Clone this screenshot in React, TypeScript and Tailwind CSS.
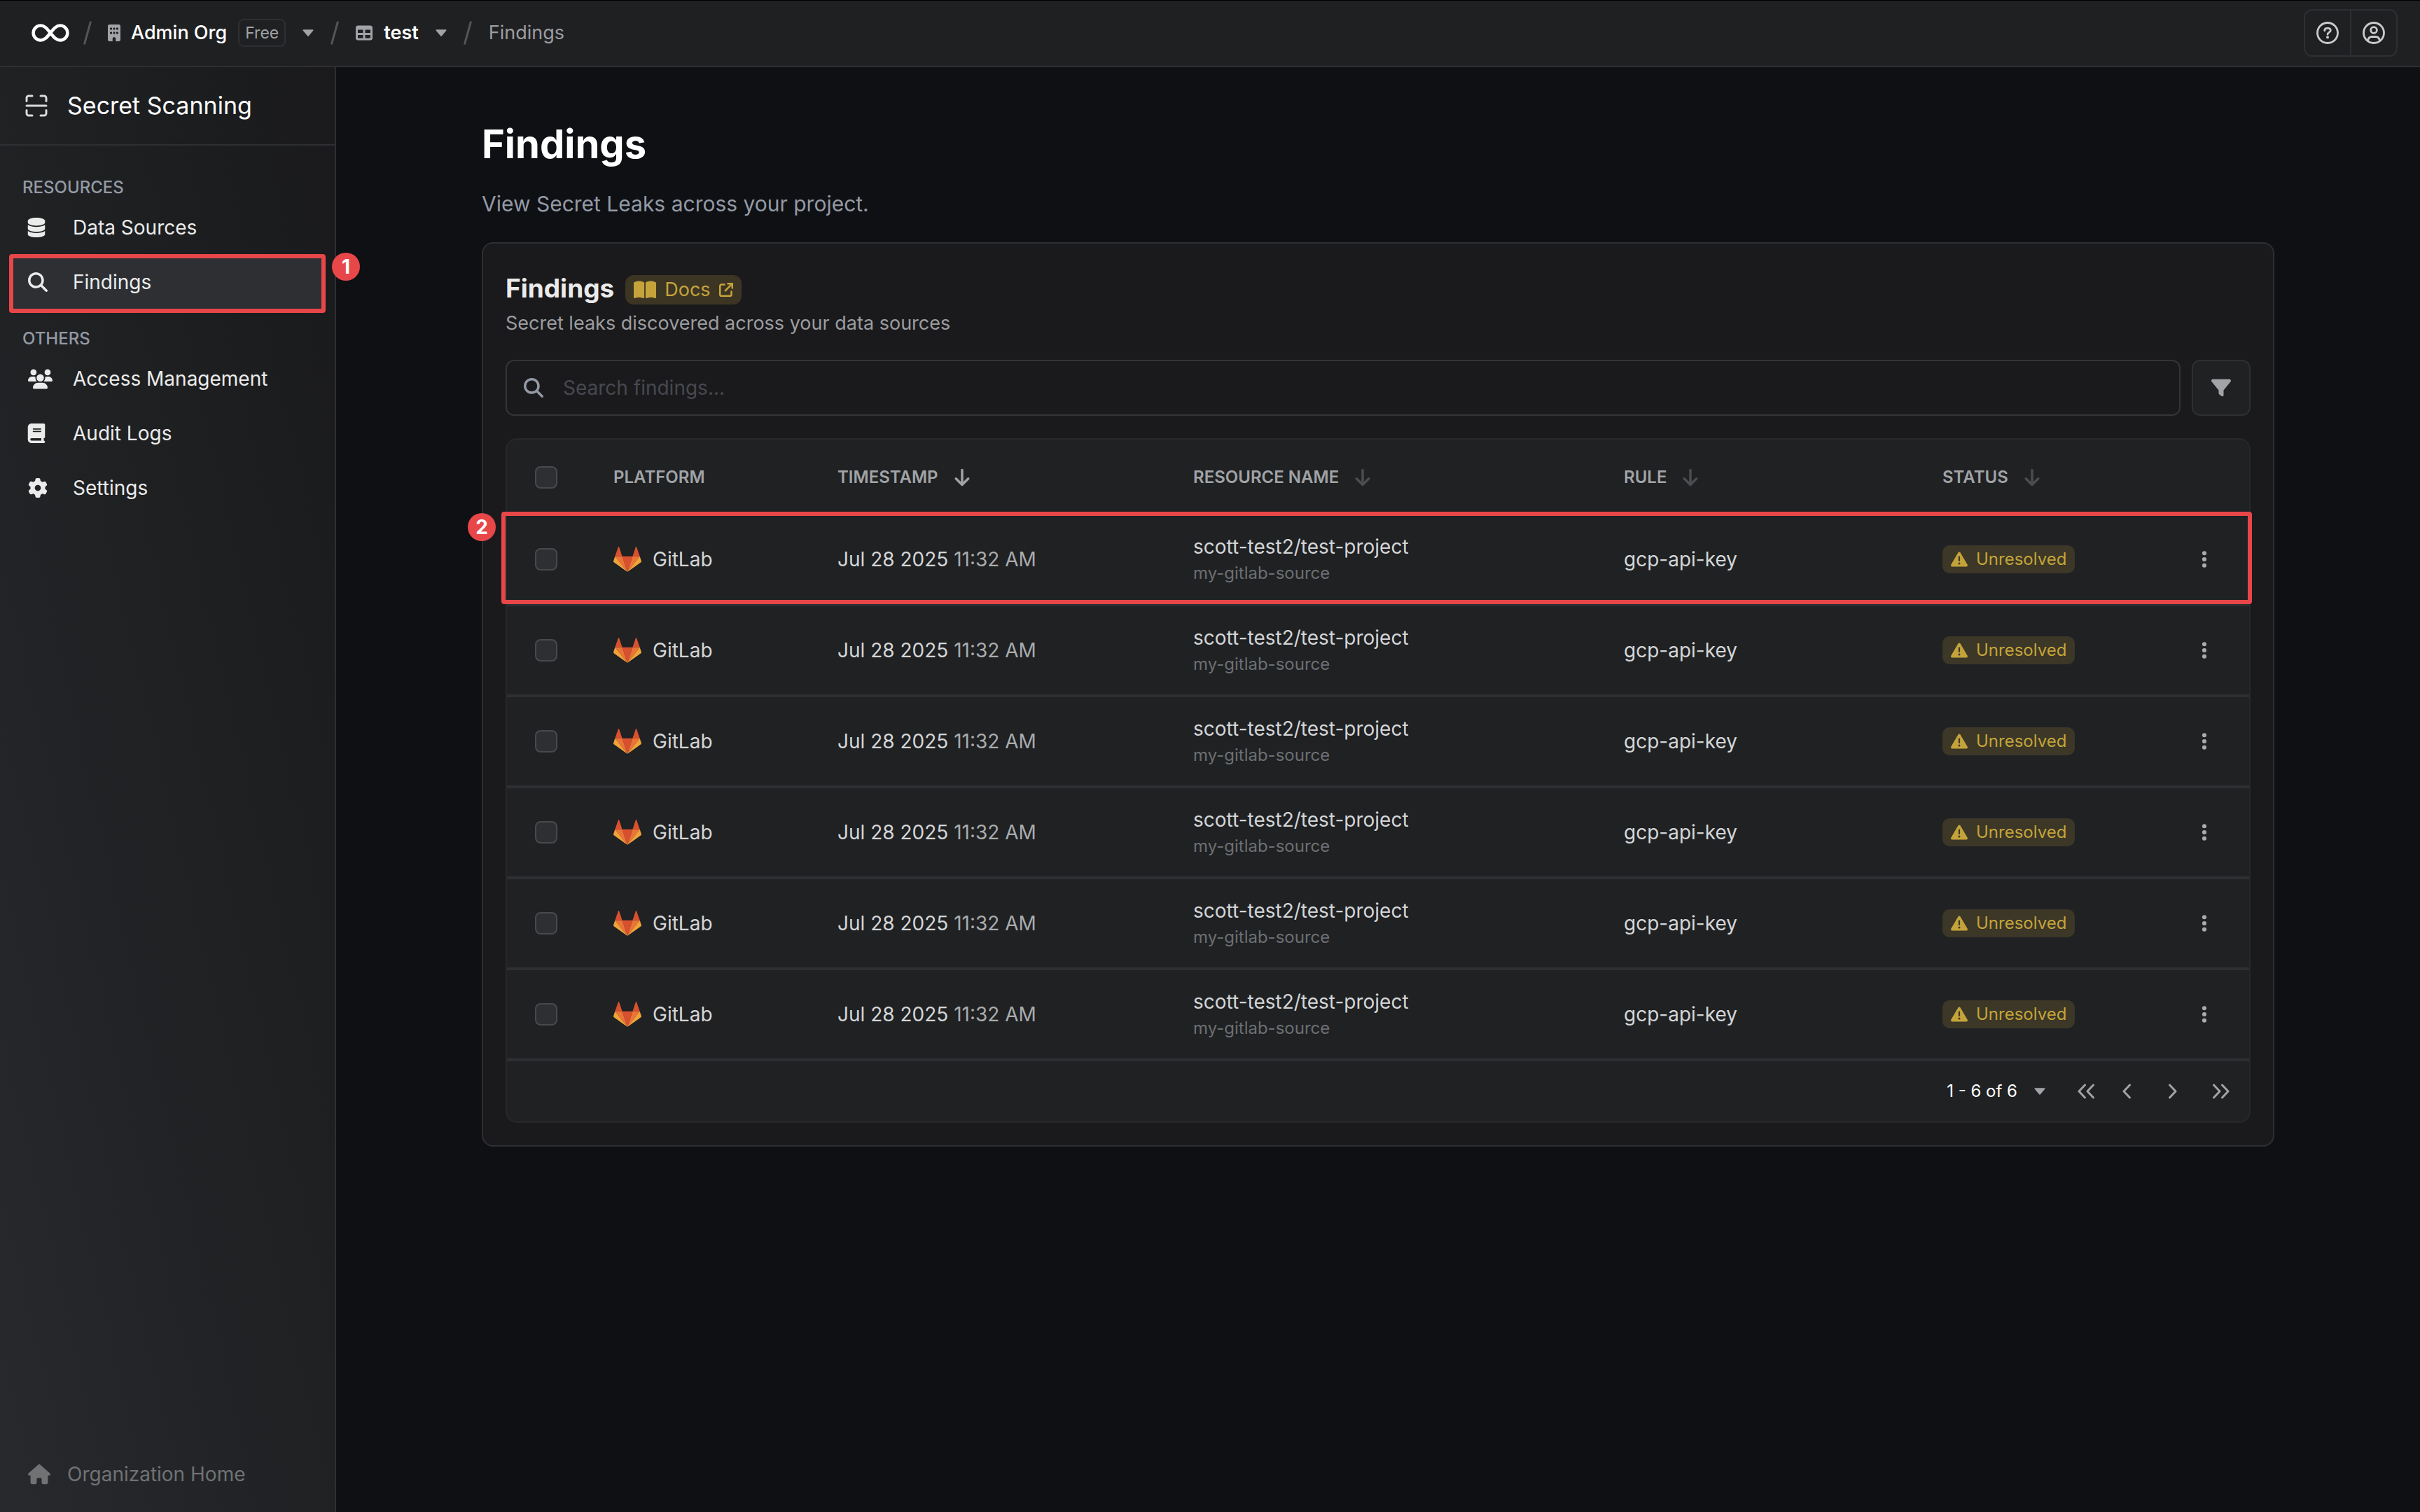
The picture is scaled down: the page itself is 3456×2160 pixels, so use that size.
import type { ReactNode } from "react";
import {
  FaArrowDown,
  FaArrowUpRightFromSquare,
  FaBook,
  FaBookOpen,
  FaBuilding,
  FaDatabase,
  FaEllipsisVertical,
  FaFilter,
  FaGear,
  FaHouse,
  FaMagnifyingGlass,
  FaTable,
  FaTriangleExclamation,
  FaUsers,
} from "react-icons/fa6";

const findings = Array.from({ length: 6 }, (_, i) => ({
  id: i + 1,
  platform: "GitLab",
  date: "Jul 28 2025",
  time: "11:32 AM",
  resource: "scott-test2/test-project",
  source: "my-gitlab-source",
  rule: "gcp-api-key",
  status: "Unresolved",
}));

function InfinityLogo() {
  return (
    <svg className="h-[26px] w-[54px]" viewBox="0 0 54 26" fill="none" stroke="#fff" strokeWidth="4.5">
      <path d="M27 13C21.5 6 18.5 2.6 13 2.6A10.4 10.4 0 0 0 13 23.4C18.500 23.400 21.500 20 27 13S35.500 2.600 41 2.600A10.400 10.400 0 0 1 41 23.400C35.500 23.400 32.500 20 27 13Z" />
    </svg>
  );
}

function Slash() {
  return (
    <svg className="h-[34px] w-3 shrink-0" viewBox="0 0 12 34" stroke="#545557" strokeWidth="3" strokeLinecap="round">
      <path d="M10.300 1.700 1.700 32.300" />
    </svg>
  );
}

function ScanIcon() {
  return (
    <svg className="h-8 w-8" viewBox="0 0 32 32" fill="none" stroke="#d9dadb" strokeWidth="3" strokeLinecap="round">
      <path d="M2 9.500V5a3 3 0 0 1 3-3h5M22 2h5a3 3 0 0 1 3 3v4.500M30 22.500V27a3 3 0 0 1-3 3h-5M10 30H5a3 3 0 0 1-3-3v-4.500M2 16h28" />
    </svg>
  );
}

function GitLabLogo() {
  return (
    <svg className="h-9 w-10 shrink-0" viewBox="0 0 40 36">
      <path fill="#d9502f" d="M20 36 27.400 13.700H12.600Z" />
      <path fill="#ec7436" d="M20 36 12.600 13.700H2.300ZM20 36l7.400-22.300h10.300Z" />
      <path fill="#f0a33a" d="M2.300 13.700.1 20.500c-.2.700 0 1.300.6 1.700L20 36ZM37.700 13.700l2.200 6.800c.2.700 0 1.300-.6 1.700L20 36Z" />
      <path fill="#d9502f" d="M2.300 13.700h10.300L8.200.4C8 -.1 7.100-.1 6.900.4ZM37.700 13.700H27.400L31.800.4c.2-.500 1.100-.500 1.300 0Z" />
    </svg>
  );
}

function HelpIcon() {
  return (
    <svg className="h-8 w-8" viewBox="0 0 32 32" fill="none" stroke="#c8cacc" strokeWidth="2.800">
      <circle cx="16" cy="16" r="14.500" />
      <path d="M11.800 12.800c0-2.300 1.500-3.500 3.400-3.500h1.700c2 0 3.400 1.300 3.400 3.100 0 2.600-4.300 3-4.300 5.800" strokeLinecap="round" />
      <circle cx="16" cy="22.300" r="2" fill="#c8cacc" stroke="none" />
    </svg>
  );
}

function UserIcon() {
  return (
    <svg className="h-8 w-8" viewBox="0 0 32 32" fill="none" stroke="#c8cacc" strokeWidth="2.800">
      <circle cx="16" cy="16" r="14.500" />
      <circle cx="16" cy="12" r="4.400" />
      <path d="M7.500 27.200c.6-3.600 2.700-5.700 5.500-5.700h6c2.800 0 4.900 2.100 5.500 5.700" />
    </svg>
  );
}

function Chevron({ double, right }: { double?: boolean; right?: boolean }) {
  return (
    <svg
      className={`h-[22px] ${double ? "w-6" : "w-3"} ${right ? "rotate-180" : ""}`}
      viewBox={double ? "0 0 24 22" : "0 0 12 22"}
      fill="none"
      stroke="#a1a3a6"
      strokeWidth="3"
      strokeLinecap="round"
      strokeLinejoin="round"
    >
      <path d={double ? "M10.500 2 2 11l8.500 9M22.500 2 14 11l8.500 9" : "M10.500 2 2 11l8.500 9"} />
    </svg>
  );
}

function Caret() {
  return (
    <svg className="h-[10px] w-4" viewBox="0 0 16 10" fill="#a1a3a6" stroke="#a1a3a6" strokeWidth="2" strokeLinejoin="round">
      <path d="M1.500 1.200h13L8 8.800Z" />
    </svg>
  );
}

function Checkbox({ label }: { label: string }) {
  return (
    <input
      type="checkbox"
      aria-label={label}
      className="block h-8 w-8 appearance-none rounded-lg border-2 border-[#47494d] bg-[#2d2f33]"
    />
  );
}

function Marker({ children, className }: { children: ReactNode; className: string }) {
  return (
    <span
      className={`absolute flex h-10 w-10 items-center justify-center rounded-full bg-[#e84749] text-[28px] leading-10 font-bold text-white ${className}`}
    >
      {children}
    </span>
  );
}

function NavItem({ icon, label, active }: { icon: ReactNode; label: string; active?: boolean }) {
  return (
    <li className="relative">
      <a
        href="#"
        className={`flex h-[78px] items-center px-6 text-[28px] text-[#ebebeb] ${active ? "bg-[#2d2f33]" : ""}`}
      >
        <span className="flex w-16 shrink-0">{icon}</span>
        {label}
      </a>
      {active && (
        <>
          <span className="absolute -inset-x-[3px] -top-px -bottom-[5px] rounded border-[6px] border-[#e84749]" />
          <Marker className="-top-[3px] -right-[52px]">1</Marker>
        </>
      )}
    </li>
  );
}

function SortHeader({ label, active }: { label: string; active?: boolean }) {
  return (
    <th scope="col" className="px-10 pt-1 text-left font-semibold">
      <button type="button" className="flex items-center gap-5 uppercase">
        {label}
        <FaArrowDown className={`h-7 w-7 ${active ? "text-[#a1a3a6]" : "text-[#4b4d50]"}`} />
      </button>
    </th>
  );
}

export default function App() {
  return (
    <div className="flex min-h-screen flex-col bg-[#0e1014] font-['Inter',sans-serif] text-[28px] leading-10 text-[#d4d5d7]">
      <header className="flex h-24 items-center border-b-2 border-[#2d2f33] bg-[#1f2022] pr-8 pl-[45px] text-[27px] shadow-[inset_0_1px_0_#000]">
        <a href="#" aria-label="Home">
          <InfinityLogo />
        </a>
        <nav aria-label="Breadcrumb" className="flex items-center">
          <span className="ml-5"><Slash /></span>
          <a href="#" className="ml-5 flex items-center font-medium text-white">
            <FaBuilding className="h-6 w-6 text-[#a1a3a6]" />
            <span className="ml-3">Admin Org</span>
            <span className="ml-4 flex h-10 items-center rounded-lg border-2 border-[#2d2f33] px-2 text-[23px] font-normal text-[#a1a3a6]">
              Free
            </span>
          </a>
          <button type="button" aria-label="Switch organization" className="ml-6"><Caret /></button>
          <span className="ml-6"><Slash /></span>
          <a href="#" className="ml-6 flex items-center font-semibold text-white">
            <FaTable className="h-6 w-6 text-[#a1a3a6]" />
            <span className="ml-4">test</span>
          </a>
          <button type="button" aria-label="Switch project" className="ml-6"><Caret /></button>
          <span className="ml-6"><Slash /></span>
          <span className="ml-6 text-[#9b9da0]">Findings</span>
        </nav>
        <div className="ml-auto flex h-[68px] rounded-xl border-2 border-[#2d2f33]">
          <button type="button" aria-label="Help" className="flex w-16 items-center justify-center">
            <HelpIcon />
          </button>
          <button type="button" aria-label="Account" className="flex w-[66px] items-center justify-center border-l-2 border-[#2d2f33]">
            <UserIcon />
          </button>
        </div>
      </header>

      <div className="flex grow">
        <aside className="flex w-[480px] shrink-0 flex-col border-r-2 border-[#2d2f33] bg-linear-to-tr from-[#28292d] via-[#1f2123] to-[#1a1a1c]">
          <div className="flex h-28 items-center gap-7 border-b-2 border-[#2d2f33] pl-9 text-[34px] text-white">
            <ScanIcon />
            Secret Scanning
          </div>
          <nav className="px-4 pt-11">
            <h2 className="mb-[2px] pl-4 text-[24px] leading-8 font-medium text-[#949aa5]">RESOURCES</h2>
            <ul>
              <NavItem icon={<FaDatabase className="-ml-[2px] h-7 w-7" />} label="Data Sources" />
              <NavItem active icon={<FaMagnifyingGlass className="h-7 w-7" />} label="Findings" />
            </ul>
            <h2 className="mt-[26px] mb-[2px] pl-4 text-[24px] leading-8 font-medium text-[#949aa5]">OTHERS</h2>
            <ul>
              <NavItem icon={<FaUsers className="h-[35px] w-[35px]" />} label="Access Management" />
              <NavItem icon={<FaBook className="-ml-[2px] h-7 w-7" />} label="Audit Logs" />
              <NavItem icon={<FaGear className="h-7 w-7" />} label="Settings" />
            </ul>
          </nav>
          <a href="#" className="mt-auto mb-[34px] flex items-center gap-6 pl-10 text-[#707274]">
            <FaHouse className="h-8 w-8" />
            Organization Home
          </a>
        </aside>

        <main className="min-w-0 grow px-8">
          <div className="mx-auto max-w-[2560px] pt-[74px]">
            <h1 className="text-[56px] leading-[72px] font-bold text-white">Findings</h1>
            <p className="mt-7 text-[30px] leading-[42px] text-[#949aa5]">View Secret Leaks across your project.</p>

            <section className="mt-[34px] rounded-2xl border-2 border-[#2d2f33] bg-[#1a1a1c] p-8 pt-9">
              <div className="flex items-center gap-4">
                <h2 className="text-[37px] leading-[56px] font-bold text-[#ebebeb]">Findings</h2>
                <a href="#" className="mt-1 flex h-[42px] items-center rounded-xl bg-[#3c3524] px-3 text-[27px] text-[#c4a43a]">
                  <FaBookOpen className="h-8 w-8" />
                  <span className="ml-3">Docs</span>
                  <FaArrowUpRightFromSquare className="ml-3 h-5 w-5" />
                </a>
              </div>
              <p className="mt-[2px] text-[27px] text-[#9b9da0]">Secret leaks discovered across your data sources</p>

              <div className="mt-8 flex gap-4">
                <label className="flex h-20 grow items-center rounded-xl border-2 border-[#323439] px-6">
                  <FaMagnifyingGlass className="h-7 w-7 shrink-0 text-[#949aa5]" />
                  <input
                    type="text"
                    aria-label="Search findings"
                    placeholder="Search findings..."
                    className="ml-7 min-w-0 grow bg-transparent outline-none placeholder:text-[#47484f]"
                  />
                </label>
                <button
                  type="button"
                  aria-label="Filter findings"
                  className="flex h-20 w-[84px] items-center justify-center rounded-xl border-2 border-[#2d2f33] bg-[#1f2123] text-[#a1a3a6]"
                >
                  <FaFilter className="h-7 w-7" />
                </button>
              </div>

              <div className="mt-8 rounded-2xl border-2 border-[#27282b] bg-[#1f2123]">
                <table className="w-full table-fixed border-collapse">
                  <colgroup>
                    <col className="w-[112px]" />
                    <col className="w-[320px]" />
                    <col className="w-[508px]" />
                    <col className="w-[615px]" />
                    <col className="w-[455px]" />
                    <col className="w-[350px]" />
                    <col className="w-[128px]" />
                  </colgroup>
                  <thead>
                    <tr className="h-[106px] border-b-4 border-[#2d2f33] text-[24px] text-[#a1a3a6]">
                      <th scope="col" className="px-10 pt-1"><Checkbox label="Select all findings" /></th>
                      <th scope="col" className="px-10 pt-1 text-left font-semibold">PLATFORM</th>
                      <SortHeader label="Timestamp" active />
                      <SortHeader label="Resource Name" />
                      <SortHeader label="Rule" />
                      <SortHeader label="Status" />
                      <th scope="col" aria-label="Actions" />
                    </tr>
                  </thead>
                  <tbody>
                    {findings.map((f, i) => (
                      <tr key={f.id} className="relative h-[130px] border-b-4 border-[#2d2f33]">
                        <td className="px-10">
                          <Checkbox label={`Select finding ${f.id}`} />
                          {i === 0 && (
                            <>
                              <span className="pointer-events-none absolute -top-[3px] -right-1 -bottom-[3px] -left-2 rounded border-[6px] border-[#e84749]" />
                              <Marker className="-top-px -left-14">2</Marker>
                            </>
                          )}
                        </td>
                        <td className="px-10">
                          <span className="flex items-center gap-4">
                            <GitLabLogo />
                            {f.platform}
                          </span>
                        </td>
                        <td className="px-10">
                          {f.date} <span className="text-[#a9abad]">{f.time}</span>
                        </td>
                        <td className="px-10">
                          <p>{f.resource}</p>
                          <p className="text-[24px] leading-9 text-[#6d6f72]">{f.source}</p>
                        </td>
                        <td className="px-10">{f.rule}</td>
                        <td className="px-10">
                          <span className="flex h-10 w-fit items-center gap-3 rounded-[10px] bg-[#3c3727] px-3 text-[24px] text-[#c4a43a]">
                            <FaTriangleExclamation className="h-6 w-6" />
                            {f.status}
                          </span>
                        </td>
                        <td>
                          <button type="button" aria-label="Finding actions" className="mx-auto block text-[#a9abad]">
                            <FaEllipsisVertical className="h-7 w-7" />
                          </button>
                        </td>
                      </tr>
                    ))}
                  </tbody>
                </table>
                <div className="flex h-[86px] items-center justify-end pr-7 text-[24px] text-white">
                  <span>1 - 6 of 6</span>
                  <button type="button" aria-label="Rows per page" className="ml-6"><Caret /></button>
                  <button type="button" aria-label="First page" className="ml-[46px]"><Chevron double /></button>
                  <button type="button" aria-label="Previous page" className="ml-10"><Chevron /></button>
                  <button type="button" aria-label="Next page" className="ml-[54px]"><Chevron right /></button>
                  <button type="button" aria-label="Last page" className="ml-[51px]"><Chevron double right /></button>
                </div>
              </div>
            </section>
          </div>
        </main>
      </div>
    </div>
  );
}
